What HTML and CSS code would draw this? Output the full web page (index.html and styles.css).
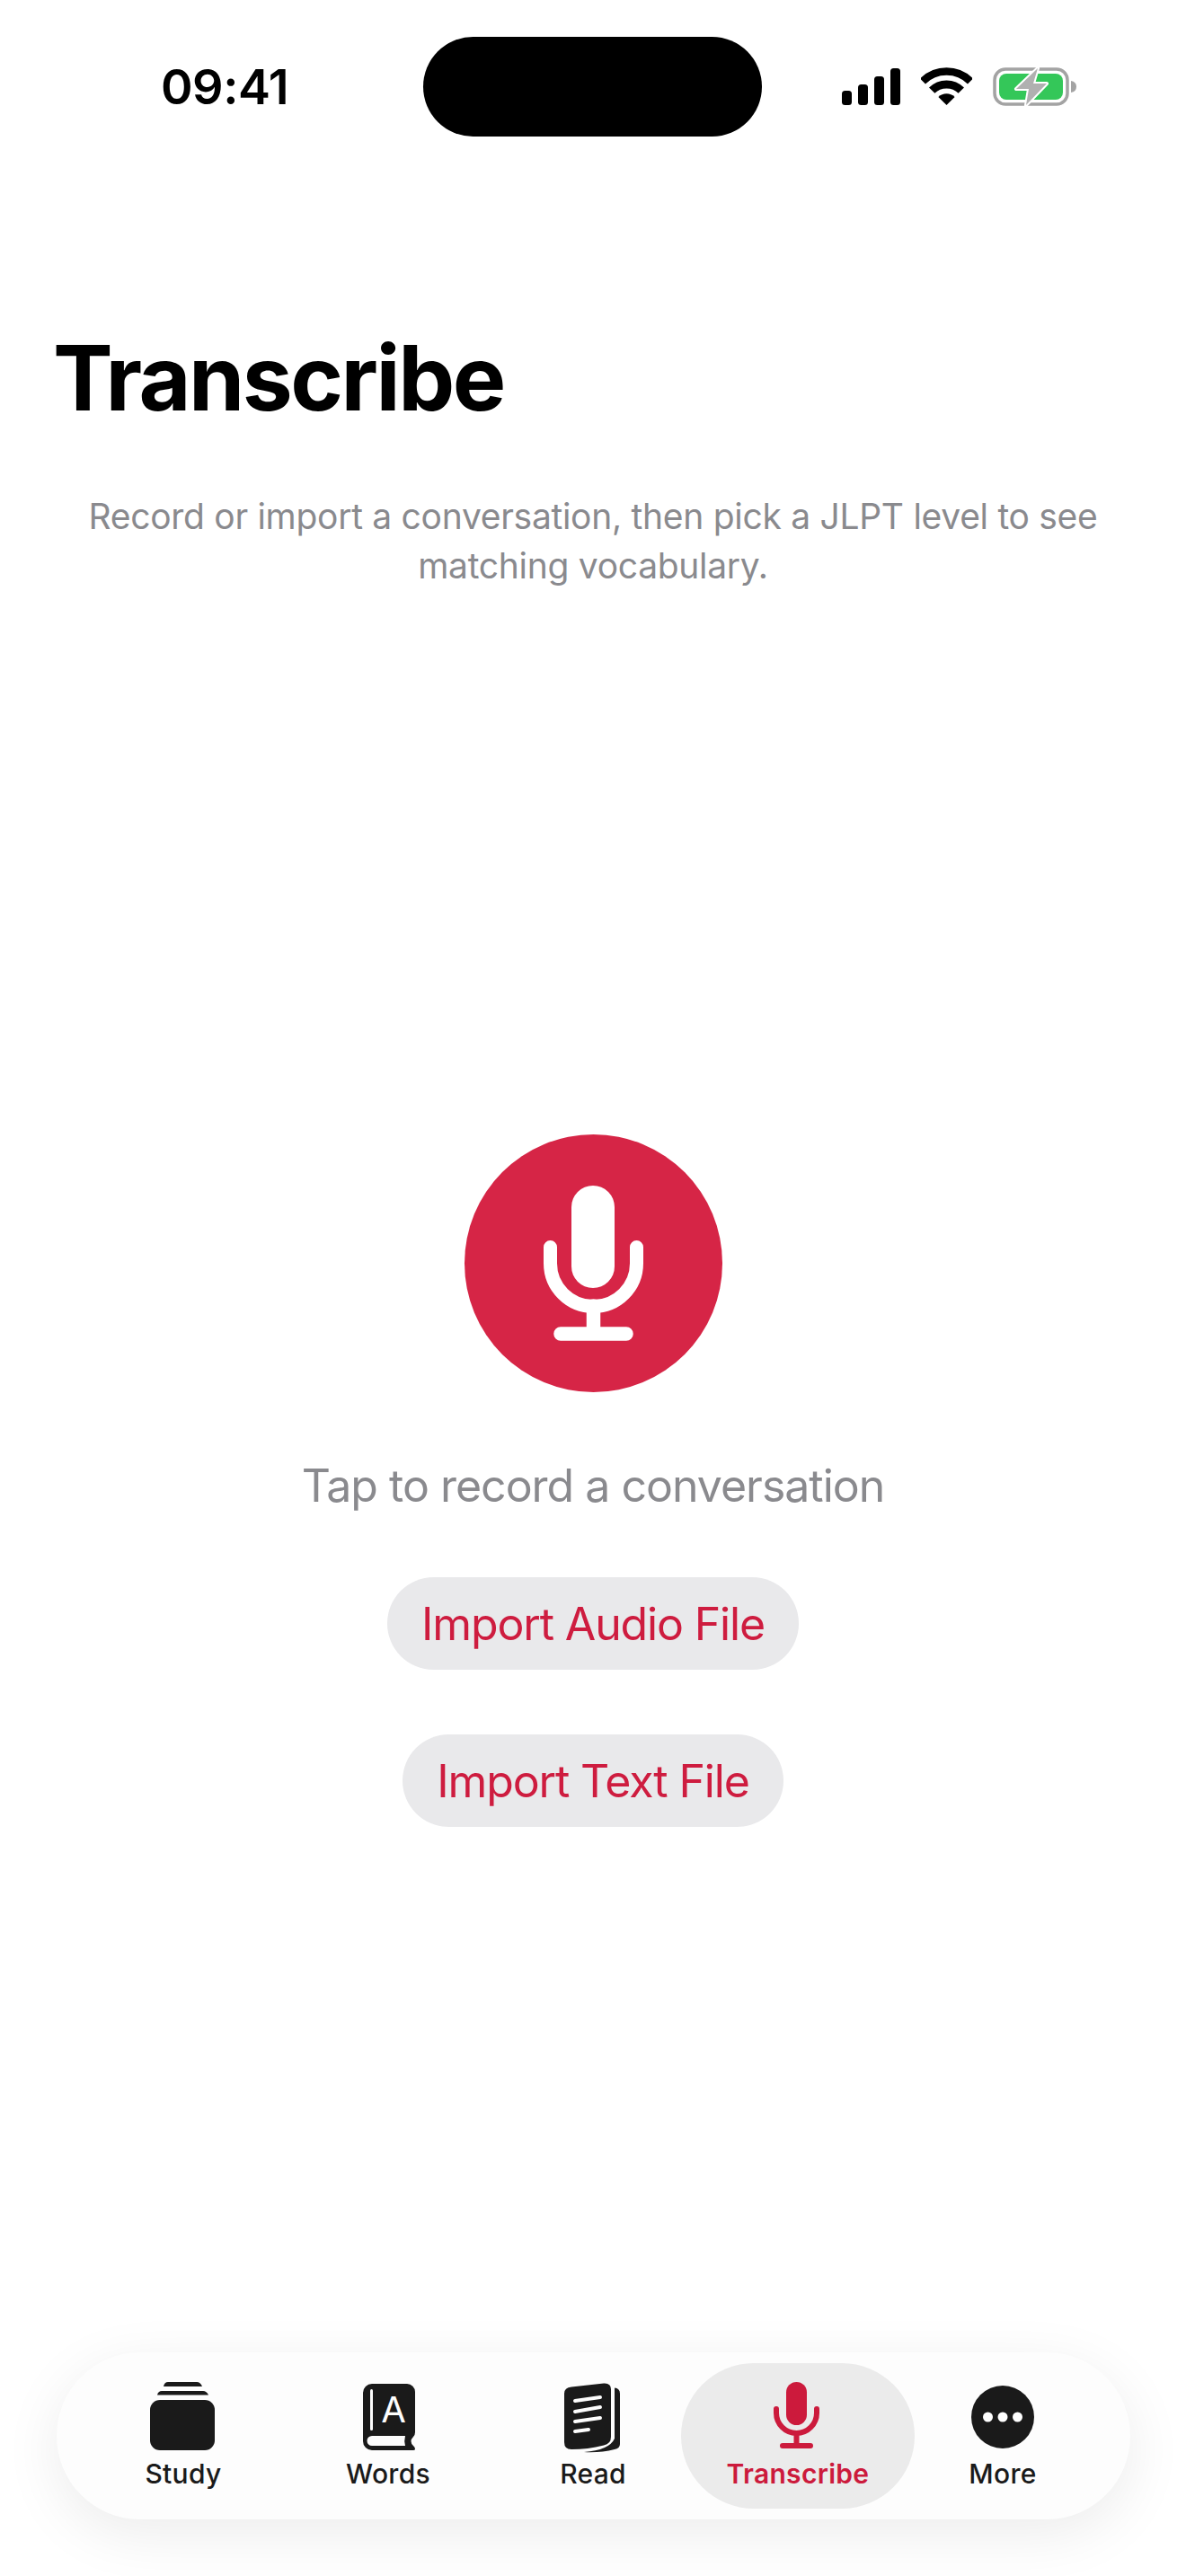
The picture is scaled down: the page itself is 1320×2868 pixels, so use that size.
FILE: index.html
```html
<!DOCTYPE html>
<html>

<head>
    <meta charset='utf-8'>
    <title>Transcribe</title>
    <link rel="stylesheet" href="styles.css">
</head>

<body>
    <div class="phone">
        <div class="status-bar">
            <div class="time">09:41</div>
            <div class="island"></div>
            <div class="status-icons">
                <svg class="signal" width="65" height="41" viewBox="0 0 65 41">
                    <rect x="0" y="25" width="11" height="16" rx="3.5" />
                    <rect x="18" y="18" width="11" height="23" rx="3.5" />
                    <rect x="36" y="9" width="11" height="32" rx="3.5" />
                    <rect x="54" y="0" width="11" height="41" rx="3.5" />
                </svg>
                <svg class="wifi" width="57" height="42" viewBox="0 0 57 42">
                    <path d="M2 15.500A37.500 37.500 0 0 1 55 15.500" fill="none" stroke="#000" stroke-width="8.500" />
                    <path d="M12.200 25.700A23 23 0 0 1 44.800 25.700" fill="none" stroke="#000" stroke-width="9" />
                    <path d="M28.500 42L19.400 32.900A12.900 12.900 0 0 1 37.600 32.900Z" />
                </svg>
                <svg class="battery" width="93" height="43" viewBox="0 0 93 43">
                    <rect x="2" y="2" width="81" height="39" rx="12" fill="none" stroke="#a3a3a3" stroke-width="3.500" />
                    <path d="M87 15q6 1 6 6.500t-6 6.500Z" fill="#a3a3a3" />
                    <rect x="7" y="7" width="71" height="29" rx="8" fill="#34c759" />
                    <path d="M50 1L26 24H40L37 42L60 18H45Z" fill="#b0b0b0" stroke="#fff" stroke-width="4" stroke-linejoin="round" paint-order="stroke" />
                </svg>
            </div>
        </div>

        <h1 class="page-title">Transcribe</h1>
        <p class="intro">Record or import a conversation, then pick a JLPT level to see matching vocabulary.</p>

        <div class="recorder">
            <div class="record-btn">
                <svg width="111" height="173" viewBox="0 0 111 173">
                    <rect x="31" y="0" width="48" height="114" rx="24" fill="#fff" />
                    <path d="M7.500 68.500V86.500a48 48 0 0 0 96 0V68.500" fill="none" stroke="#fff" stroke-width="15" stroke-linecap="round" />
                    <path d="M55.500 134V165M19 165H92" fill="none" stroke="#fff" stroke-width="15.500" stroke-linecap="round" />
                </svg>
            </div>
            <div class="record-hint">Tap to record a conversation</div>
            <div class="pill-btn">Import Audio File</div>
            <div class="pill-btn">Import Text File</div>
        </div>

        <div class="tab-bar">
            <div class="tab">
                <svg class="tab-icon" width="72" height="78" viewBox="1 0 72 78">
                    <rect x="0" y="20" width="72" height="56" rx="11" />
                    <path d="M8 14.500Q9 10 13 10H59Q63 10 65 14.500Z" />
                    <path d="M15 5Q16 0 20 0H52Q56 0 58 5Z" />
                </svg>
                <span class="tab-label">Study</span>
            </div>
            <div class="tab">
                <svg class="tab-icon" width="60" height="78" viewBox="-2 -2 60 78">
                    <path d="M10 0H49a9 9 0 0 1 9 9V54q0 3-2 5q-5 5 0 10q2 1.500 2 3.500q0 1.500-2 1.500H10a10 10 0 0 1-10-10V10A10 10 0 0 1 10 0Z" />
                    <path d="M10 58H47q-1.500 5.500 0 11H10a5.500 5.500 0 0 1 0-11Z" fill="#fdfdfd" />
                    <rect x="8" y="6" width="3" height="46" rx="1.500" fill="#fdfdfd" />
                    <text class="book-letter" x="34" y="43">A</text>
                </svg>
                <span class="tab-label">Words</span>
            </div>
            <div class="tab">
                <svg class="tab-icon" width="62" height="78" viewBox="1 -1 62 78">
                    <path d="M8 4.500L44 .5Q52 0 52 7V60Q52 68 44 69.500Q26 74 8 74Q0 74 0 66V12Q0 5 8 4.500Z" />
                    <path d="M56 5.500Q62 6 62 12V68Q62 73 56 74Q40 78 22 77Q50 75 56 62Z" />
                    <path d="M12 20L40 16M12 32L40 27M12 43L40 39M12 54L27 52" fill="none" stroke="#fdfdfd" stroke-width="4" stroke-linecap="round" />
                </svg>
                <span class="tab-label">Read</span>
            </div>
            <div class="tab active">
                <svg class="tab-icon" width="51" height="78" viewBox="2 0 51 78">
                    <rect x="14" y="0" width="23" height="48" rx="11.500" />
                    <path d="M3 30V34.500a22.500 22.500 0 0 0 45 0V30" fill="none" stroke="#cc1a3c" stroke-width="6" stroke-linecap="round" />
                    <path d="M25.500 57V71M10 71H41" fill="none" stroke="#cc1a3c" stroke-width="6" stroke-linecap="round" />
                </svg>
                <span class="tab-label">Transcribe</span>
            </div>
            <div class="tab">
                <svg class="tab-icon" width="70" height="78" viewBox="0 0 70 78">
                    <circle cx="35" cy="39" r="35" />
                    <circle cx="18.500" cy="39" r="5.500" fill="#fff" />
                    <circle cx="35" cy="39" r="5.500" fill="#fff" />
                    <circle cx="51.500" cy="39" r="5.500" fill="#fff" />
                </svg>
                <span class="tab-label">More</span>
            </div>
        </div>
    </div>
</body>
</html>
```

FILE: styles.css
```css
* {
    box-sizing: border-box;
}

html,
body {
    margin: 0;
    background: #fff;
}

body {
    font-family: Inter, "Liberation Sans", sans-serif;
    color: #000;
}

.phone {
    width: 1320px;
    height: 2868px;
    overflow: hidden;
    display: flex;
    flex-direction: column;
}

/* status bar */
.status-bar {
    display: grid;
    grid-template-columns: 471px 377px 1fr;
    padding-top: 41px;
    height: 152px;
}

.time {
    padding: 27px 0 0 179px;
    font-size: 54px;
    line-height: 57px;
    font-weight: 600;
    letter-spacing: -.5px;
}

.island {
    height: 111px;
    background: #000;
    border-radius: 56px;
}

.status-icons {
    display: flex;
    align-items: flex-start;
    padding: 34px 0 0 89px;
}

.signal {
    margin-top: 1px;
}

.wifi {
    margin-left: 23px;
}

.battery {
    margin-left: 23px;
}

/* header */
.page-title {
    margin: 0;
    padding: 209px 0 0 59px;
    font-size: 100px;
    line-height: 120px;
    font-weight: 700;
    letter-spacing: -2.5px;
}

.intro {
    margin: 0;
    padding: 66px 90px 0;
    font-size: 39px;
    line-height: 55px;
    letter-spacing: -.29px;
    color: #8a8a8e;
    text-align: center;
}

/* record area */
.recorder {
    display: flex;
    flex-direction: column;
    align-items: center;
    padding-top: 606px;
    flex: 1;
}

.record-btn {
    width: 287px;
    height: 287px;
    border-radius: 50%;
    background: #d62546;
    display: flex;
    align-items: center;
    justify-content: center;
}

.record-hint {
    margin-top: 74px;
    font-size: 50px;
    line-height: 60px;
    letter-spacing: -1px;
    color: #8a8a8e;
}

.pill-btn {
    margin-top: 72px;
    height: 103px;
    padding: 0 38px;
    border-radius: 52px;
    background: #e9e9eb;
    color: #ce1c3f;
    font-size: 50px;
    line-height: 105px;
    letter-spacing: -1.15px;
}

/* tab bar */
.tab-bar {
    display: grid;
    grid-template-columns: repeat(5, 228px);
    width: 1195px;
    height: 186px;
    margin: 0 0 63px 63px;
    padding: 12px 27px;
    border-radius: 93px;
    background: #fdfdfd;
    box-shadow: 0 16px 64px rgba(0, 0, 0, .08);
}

.tab {
    display: flex;
    flex-direction: column;
    align-items: center;
    color: #1a1a1a;
    fill: #1a1a1a;
    height: 162px;
    padding-top: 21px;
    border-radius: 81px;
}

.tab.active {
    margin: 0 -16px;
    background: #ebebeb;
    color: #cc1a3c;
    fill: #cc1a3c;
}

.tab-icon {
    display: block;
    flex: none;
    overflow: visible;
}

.tab-label {
    margin-top: 6px;
    font-size: 30px;
    line-height: 36px;
    font-weight: 500;
    letter-spacing: .3px;
}

.active .tab-label {
    font-weight: 600;
}

.book-letter {
    font-size: 40px;
    fill: #fdfdfd;
    text-anchor: middle;
}
```
